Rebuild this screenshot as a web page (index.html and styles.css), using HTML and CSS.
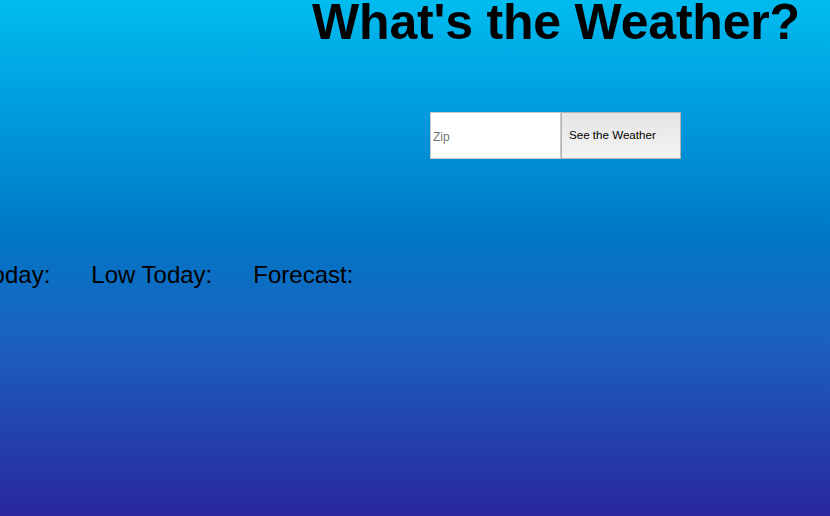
FILE: index.html
```html
<!DOCTYPE html>
<html lang="en">
<head>
<meta charset="utf-8">
<title>What's the Weather?</title>
<link rel="stylesheet" href="styles.css">
</head>
<body>
  <main class="page">
    <section class="search">
      <h1 class="title">What's the Weather?</h1>
      <form class="zip-form">
        <input class="zip-input" type="text" placeholder="Zip">
        <button class="zip-button" type="button">See the Weather</button>
      </form>
    </section>
    <section class="stats">
      <div class="stat">High Today:</div>
      <div class="stat">Low Today:</div>
      <div class="stat">Forecast:</div>
    </section>
  </main>
</body>
</html>
```
FILE: styles.css
```css
html, body {
  margin: 0;
  padding: 0;
  height: 100%;
  overflow: hidden;
}

body {
  background: linear-gradient(to bottom, #00bcef 0%, #0096da 25%, #0078c6 45%, #1b62c0 65%, #2a26a0 100%);
  font-family: "Liberation Sans", Arial, Helvetica, sans-serif;
  color: #000;
}

.page {
  display: flex;
  flex-direction: column;
}

.search {
  margin-left: 282px;
  display: flex;
  flex-direction: column;
  align-items: center;
}

.title {
  margin: 2px 0 0 0;
  font-size: 50px;
  font-weight: bold;
  line-height: 40px;
  letter-spacing: -0.2px;
}

.zip-form {
  display: flex;
  margin-top: 70px;
  margin-left: -1px;
}

.zip-input {
  box-sizing: border-box;
  width: 131px;
  height: 47px;
  margin: 0;
  padding: 3px 2px 0 2px;
  border: 1px solid #c9c9c9;
  background: #fff;
  font-family: "Liberation Sans", Arial, Helvetica, sans-serif;
  font-size: 12px;
  color: #000;
  outline: none;
}

.zip-input::placeholder {
  color: #757575;
}

.zip-button {
  box-sizing: border-box;
  width: 120px;
  height: 47px;
  margin: 0;
  padding: 0 0 2px 7px;
  border: 1px solid #b3b3b3;
  background: linear-gradient(to bottom, #e4e4e4, #f4f4f4);
  font-family: "Liberation Sans", Arial, Helvetica, sans-serif;
  font-size: 11.6px;
  color: #000;
  text-align: left;
}

.stats {
  display: flex;
  gap: 41px;
  margin-top: 102px;
  margin-left: -76px;
}

.stat {
  font-size: 24px;
  line-height: 28px;
  white-space: nowrap;
}
```
